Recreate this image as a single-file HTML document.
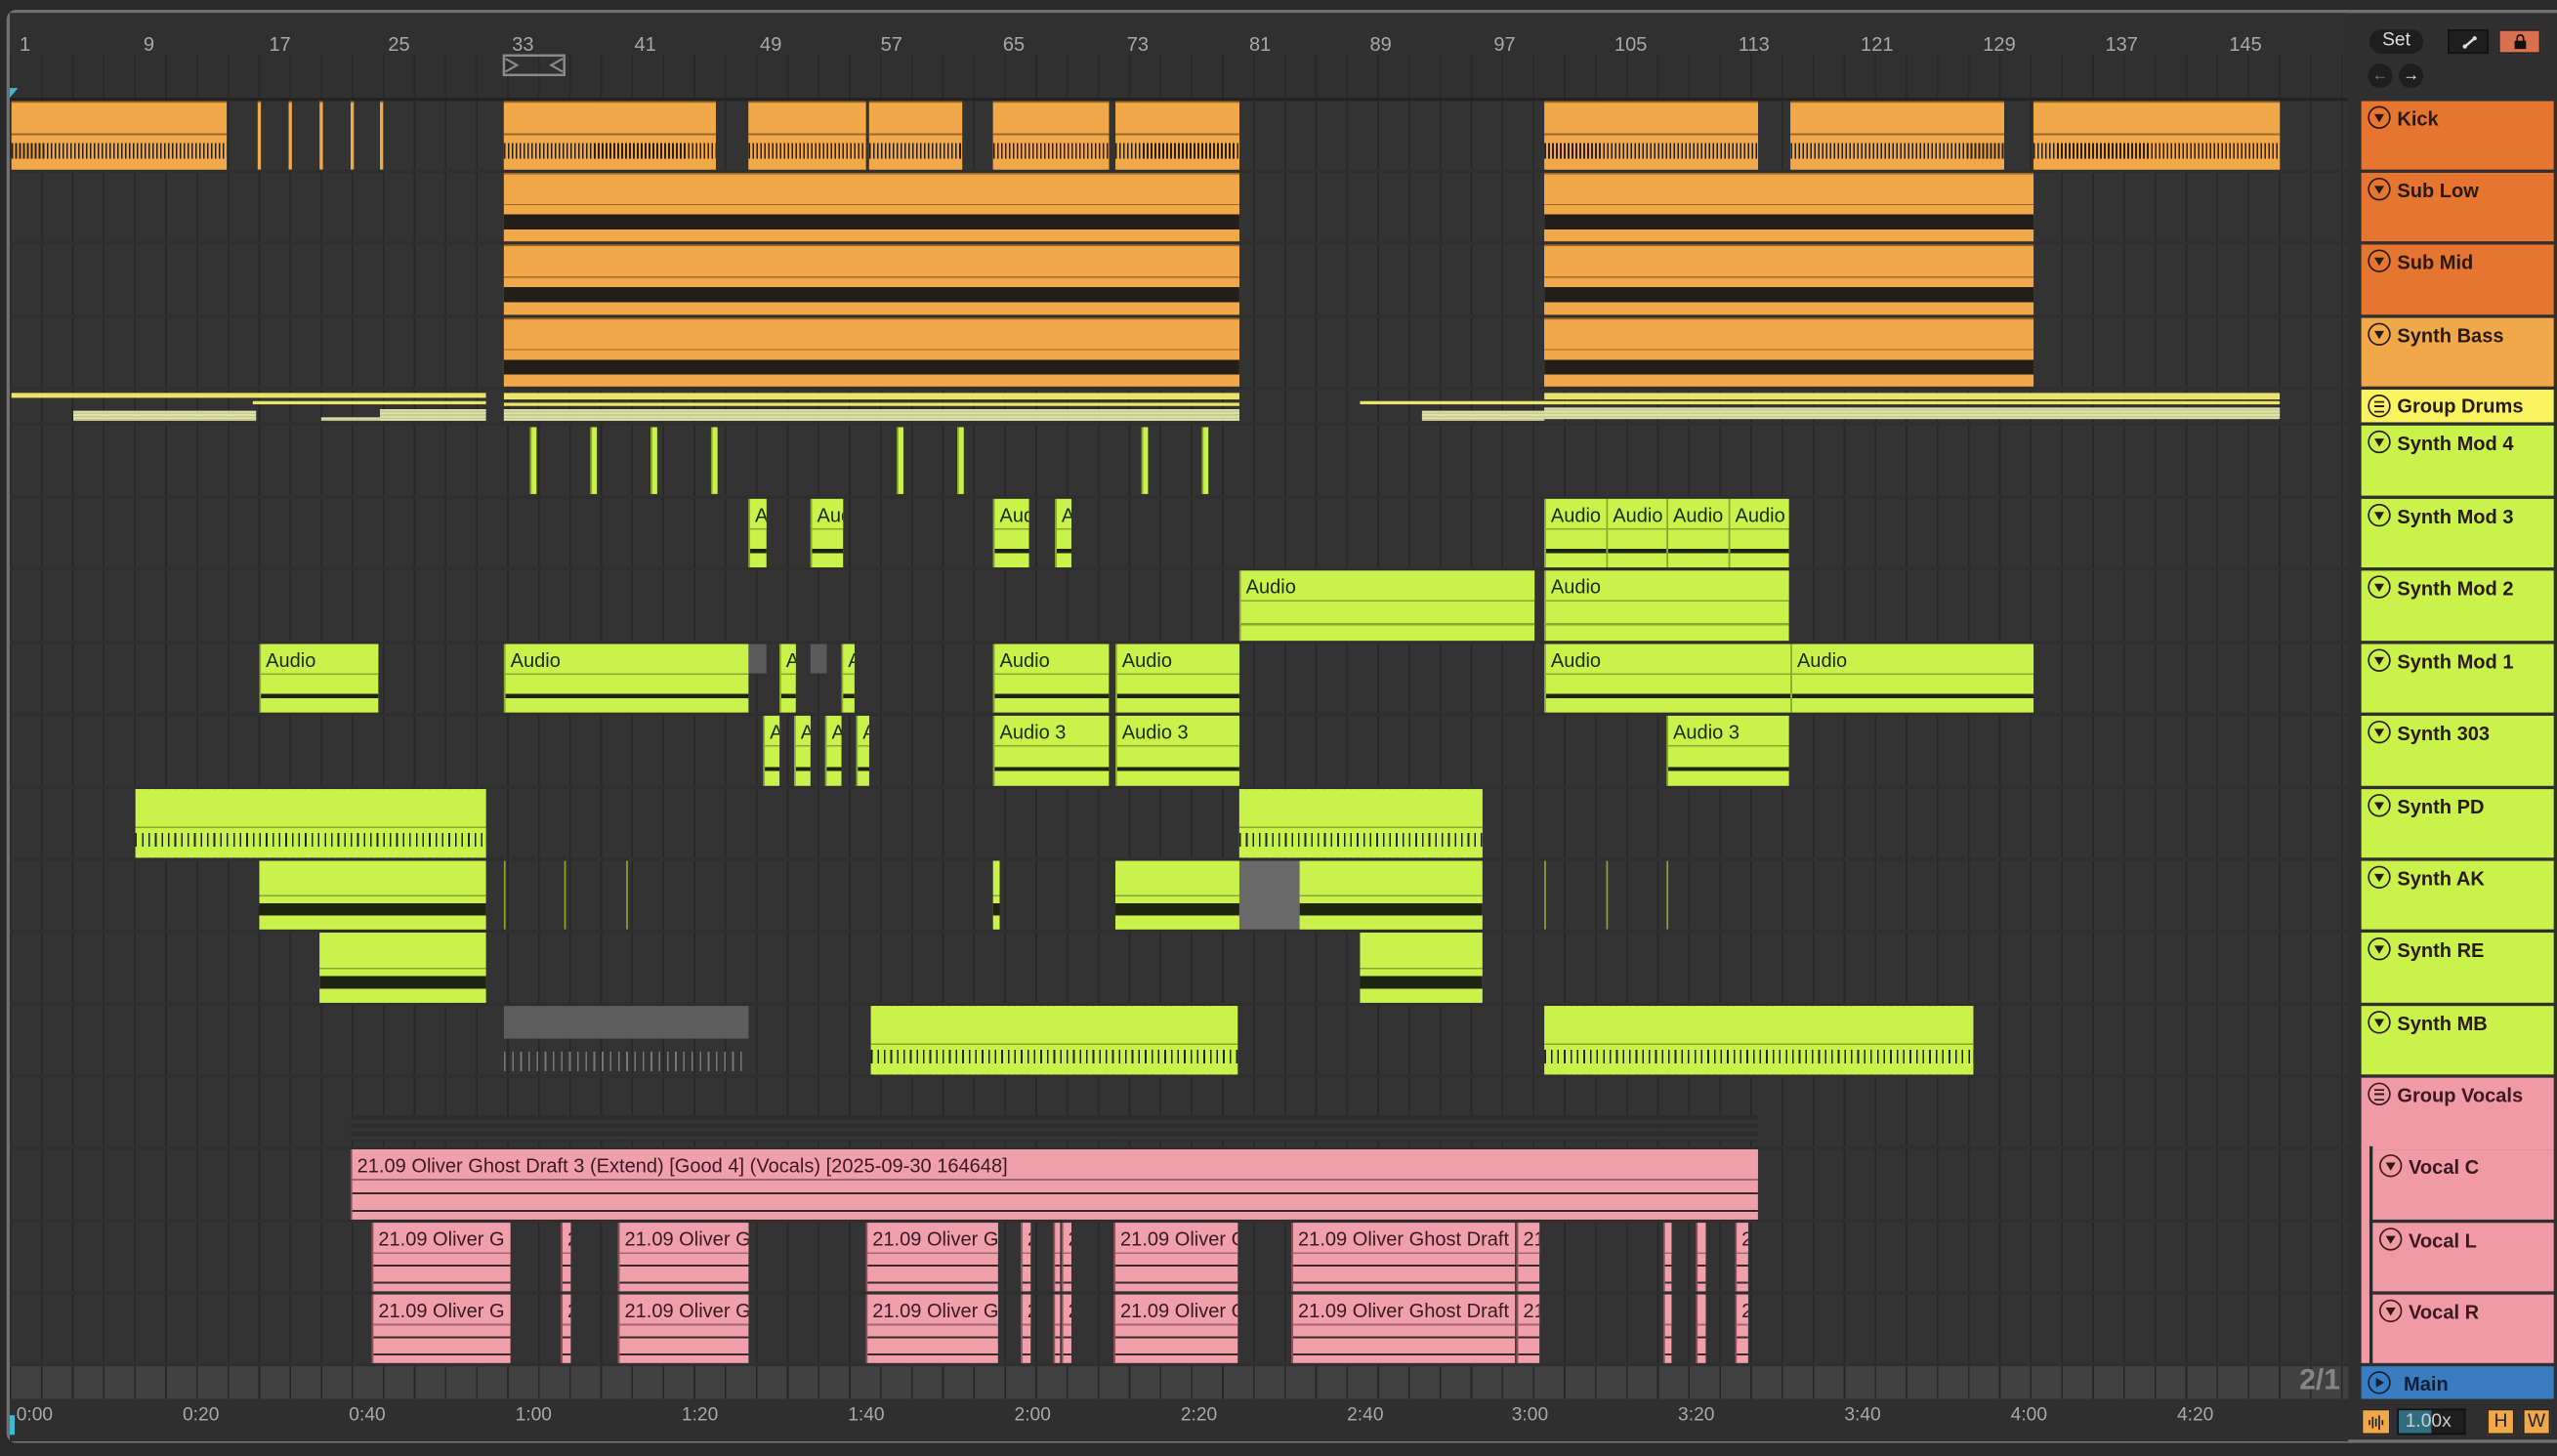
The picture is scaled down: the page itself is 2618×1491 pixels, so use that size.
<!DOCTYPE html>
<html><head><meta charset="utf-8"><style>
*{margin:0;padding:0;box-sizing:border-box}
html,body{width:2618px;height:1490px;overflow:hidden;background:#2a2a2a}
#s{position:absolute;left:0;top:0;width:1568px;height:893px;transform:scale(1.66964);transform-origin:0 0;font-family:"Liberation Sans",sans-serif;background:#2a2a2a}
.a{position:absolute}
#frame{position:absolute;left:4px;top:6px;width:1570px;height:879px;border:2px solid #707070;border-radius:6px;background:#2f2f2f}
.lane{position:absolute;left:6px;width:1434px;background-color:#333;background-image:repeating-linear-gradient(90deg,#272727 0 1px,transparent 1px 19.06px)}
.o{position:absolute;background:#f0a848;border-top:1px solid #a06a25}
.kk{background-image:linear-gradient(#f0a848 0 46%,#9a6a2a 46% 49%,#f0a848 49% 60%,transparent 60% 84%,#f0a848 84%),repeating-linear-gradient(90deg,#2a2014 0 1px,#f0a848 1px 2.4px)}
.sb{background-image:linear-gradient(#f0a848 0 44%,#9a6a2a 44% 46%,#f0a848 46% 60%,#241e18 60% 82%,#f0a848 82%)}
.l{position:absolute;background:#c9f24b;border-left:1px solid #8aa830;overflow:hidden;font-size:12px;color:#1f2a08;white-space:nowrap;padding:3px 0 0 3px;background-image:linear-gradient(#c9f24b 0 18px,#8aa830 18px 19px,transparent 19px),linear-gradient(transparent 0 73%,#1e2410 73% 79%,transparent 79%)}
.lm{position:absolute;background:#c9f24b;background-image:linear-gradient(#c9f24b 0 55%,#8aa830 55% 57%,#c9f24b 57% 64%,transparent 64% 84%,#c9f24b 84%),repeating-linear-gradient(90deg,#1e2410 0 1px,#c9f24b 1px 4px)}
.lb{position:absolute;background:#c9f24b;background-image:linear-gradient(#c9f24b 0 50%,#8aa830 50% 52%,#c9f24b 52% 62%,#1e2410 62% 80%,#c9f24b 80%)}
.g{position:absolute;background:#5a5a5a}
.p{position:absolute;background:#f0a0aa;border-left:1px solid #905058;overflow:hidden;font-size:12px;color:#3a1a20;white-space:nowrap;padding:3px 0 0 3px;background-image:linear-gradient(#f0a0aa 0 18px,#a06870 18px 19px,transparent 19px),linear-gradient(transparent 0 61%,#3a2a2c 61% 64%,transparent 64% 86%,#3a2a2c 86% 89%,transparent 89%)}
.t{position:absolute;width:4px;background:#c9f24b;border-left:1px solid #8aa830}
.h{position:absolute;left:1448px;width:118px;font-size:12px;font-weight:bold;color:#2a1a10;padding:4px 0 0 22px;white-space:nowrap}
.h i{position:absolute;left:4px;top:3px;width:14px;height:14px;border:1.3px solid #2a1a10;border-radius:50%}
.h i:after{content:"";position:absolute;left:2.6px;top:4px;border-left:3.4px solid transparent;border-right:3.4px solid transparent;border-top:5px solid #2a1a10}
.h i.gr:after{border:none;top:3px;left:3px;width:6px;height:5px;border-top:1.3px solid #2a1a10;border-bottom:1.3px solid #2a1a10;background:linear-gradient(transparent 1.5px,#2a1a10 1.5px 2.8px,transparent 2.8px)}
.h i.pl:after{left:4px;top:2.6px;border-top:3.4px solid transparent;border-bottom:3.4px solid transparent;border-left:5px solid #10203a;border-right:none}
.rl{position:absolute;top:20px;font-size:12px;color:#a8a8a8}
.tl{position:absolute;top:862px;font-size:11.5px;color:#a8a8a8}
.y{position:absolute;background:#ece468}
.yl{position:absolute;background:#dfe3a8;background-image:repeating-linear-gradient(#dfe3a8 0 1px,#c8cc90 1px 2px)}
</style></head><body><div id="s">
<div id="frame"></div>
<div class="a" style="left:6px;top:8px;width:1434px;height:53px;background:#303030;background-image:repeating-linear-gradient(90deg,#272727 0 1px,transparent 1px 19.06px);background-position:0 25px;background-size:100% 28px;background-repeat:repeat-x"></div>
<div class="a" style="left:6px;top:8px;width:1434px;height:25px;background:#303030"></div>
<div class="rl" style="left:12px">1</div><div class="rl" style="left:88px">9</div><div class="rl" style="left:165px">17</div><div class="rl" style="left:238px">25</div><div class="rl" style="left:314px">33</div><div class="rl" style="left:389px">41</div><div class="rl" style="left:466px">49</div><div class="rl" style="left:540px">57</div><div class="rl" style="left:615px">65</div><div class="rl" style="left:691px">73</div><div class="rl" style="left:766px">81</div><div class="rl" style="left:840px">89</div><div class="rl" style="left:916px">97</div><div class="rl" style="left:990px">105</div><div class="rl" style="left:1066px">113</div><div class="rl" style="left:1141px">121</div><div class="rl" style="left:1216px">129</div><div class="rl" style="left:1291px">137</div><div class="rl" style="left:1367px">145</div>
<svg class="a" style="left:308px;top:33px" width="40" height="14"><rect x="1" y="1" width="37" height="12" fill="none" stroke="#8a8a8a" stroke-width="1.5"/><path d="M2 3 L9 7 L2 11 M37 3 L30 7 L37 11" fill="none" stroke="#8a8a8a" stroke-width="1.3"/></svg>
<div class="a" style="left:6px;top:54px;border-left:5px solid #3fb8d0;border-bottom:6px solid transparent;width:0;height:0"></div>
<div class="a" style="left:6px;top:60px;width:1434px;height:2px;background:#222"></div>
<div class="lane" style="top:62px;height:42px"></div><div class="lane" style="top:106px;height:42px"></div><div class="lane" style="top:150px;height:43px"></div><div class="lane" style="top:195px;height:42px"></div><div class="lane" style="top:239px;height:20px"></div><div class="lane" style="top:261px;height:43px"></div><div class="lane" style="top:306px;height:42px"></div><div class="lane" style="top:350px;height:43px"></div><div class="lane" style="top:395px;height:42px"></div><div class="lane" style="top:439px;height:43px"></div><div class="lane" style="top:484px;height:42px"></div><div class="lane" style="top:528px;height:42px"></div><div class="lane" style="top:572px;height:43px"></div><div class="lane" style="top:617px;height:42px"></div><div class="lane" style="top:661px;height:42px"></div><div class="lane" style="top:705px;height:43px"></div><div class="lane" style="top:750px;height:42px"></div><div class="lane" style="top:794px;height:42px"></div>
<div class="lane" style="top:838px;height:20px;background-color:#414141"></div>
<div class="a" style="left:1410px;top:836px;font-size:18px;font-weight:bold;color:#858585">2/1</div>
<div class="o kk" style="left:7px;top:62px;width:132px;height:42px"></div>
<div class="o" style="left:158px;top:62px;width:1.5px;height:42px"></div><div class="o" style="left:177px;top:62px;width:1.5px;height:42px"></div><div class="o" style="left:196px;top:62px;width:1.5px;height:42px"></div><div class="o" style="left:215px;top:62px;width:1.5px;height:42px"></div><div class="o" style="left:233px;top:62px;width:1.5px;height:42px"></div>
<div class="o kk" style="left:309px;top:62px;width:130px;height:42px"></div><div class="o kk" style="left:459px;top:62px;width:72px;height:42px"></div><div class="o kk" style="left:533px;top:62px;width:57px;height:42px"></div><div class="o kk" style="left:609px;top:62px;width:71px;height:42px"></div><div class="o kk" style="left:684px;top:62px;width:76px;height:42px"></div><div class="o kk" style="left:947px;top:62px;width:131px;height:42px"></div><div class="o kk" style="left:1098px;top:62px;width:131px;height:42px"></div><div class="o kk" style="left:1247px;top:62px;width:151px;height:42px"></div>
<div class="o sb" style="left:309px;top:106px;width:451px;height:42px"></div><div class="o sb" style="left:947px;top:106px;width:300px;height:42px"></div>
<div class="o sb" style="left:309px;top:150px;width:451px;height:43px"></div><div class="o sb" style="left:947px;top:150px;width:300px;height:43px"></div>
<div class="o sb" style="left:309px;top:195px;width:451px;height:42px"></div><div class="o sb" style="left:947px;top:195px;width:300px;height:42px"></div>
<div class="y" style="left:7px;top:241px;width:291px;height:3px"></div><div class="y" style="left:309px;top:241px;width:451px;height:4px"></div><div class="y" style="left:947px;top:241px;width:451px;height:4px"></div>
<div class="y" style="left:155px;top:246px;width:143px;height:1.5px"></div><div class="y" style="left:309px;top:247px;width:451px;height:1.5px"></div><div class="y" style="left:834px;top:246px;width:564px;height:1.5px"></div>
<div class="yl" style="left:45px;top:252px;width:112px;height:6px"></div><div class="yl" style="left:233px;top:251px;width:65px;height:7px"></div><div class="yl" style="left:309px;top:251px;width:451px;height:7px"></div><div class="yl" style="left:197px;top:256px;width:36px;height:1.5px"></div><div class="yl" style="left:872px;top:252px;width:75px;height:6px"></div><div class="yl" style="left:947px;top:250px;width:451px;height:7px"></div>
<div class="t" style="left:325px;top:262px;height:41px"></div><div class="t" style="left:362px;top:262px;height:41px"></div><div class="t" style="left:399px;top:262px;height:41px"></div><div class="t" style="left:436px;top:262px;height:41px"></div><div class="t" style="left:550px;top:262px;height:41px"></div><div class="t" style="left:587px;top:262px;height:41px"></div><div class="t" style="left:700px;top:262px;height:41px"></div><div class="t" style="left:737px;top:262px;height:41px"></div>
<div class="l" style="left:459px;top:306px;width:11px;height:42px">A</div><div class="l" style="left:497px;top:306px;width:20px;height:42px">Aud</div><div class="l" style="left:609px;top:306px;width:22px;height:42px">Aud</div><div class="l" style="left:647px;top:306px;width:10px;height:42px">A</div>
<div class="l" style="left:947px;top:306px;width:38px;height:42px">Audio</div><div class="l" style="left:985px;top:306px;width:37px;height:42px">Audio</div><div class="l" style="left:1022px;top:306px;width:38px;height:42px">Audio</div><div class="l" style="left:1060px;top:306px;width:37px;height:42px">Audio</div>
<div class="l" style="left:760px;top:350px;width:181px;height:43px;background-image:linear-gradient(#c9f24b 0 18px,#8aa830 18px 19px,transparent 19px),linear-gradient(transparent 0 75%,#8aa830 75% 78%,transparent 78%)">Audio</div><div class="l" style="left:947px;top:350px;width:150px;height:43px;background-image:linear-gradient(#c9f24b 0 18px,#8aa830 18px 19px,transparent 19px),linear-gradient(transparent 0 75%,#8aa830 75% 78%,transparent 78%)">Audio</div>
<div class="l" style="left:159px;top:395px;width:73px;height:42px">Audio</div><div class="l" style="left:309px;top:395px;width:150px;height:42px">Audio</div>
<div class="g" style="left:459px;top:395px;width:11px;height:18px"></div><div class="l" style="left:478px;top:395px;width:10px;height:42px">A</div><div class="g" style="left:497px;top:395px;width:10px;height:18px"></div><div class="l" style="left:516px;top:395px;width:8px;height:42px">A</div>
<div class="l" style="left:609px;top:395px;width:71px;height:42px">Audio</div><div class="l" style="left:684px;top:395px;width:76px;height:42px">Audio</div><div class="l" style="left:947px;top:395px;width:151px;height:42px">Audio</div><div class="l" style="left:1098px;top:395px;width:149px;height:42px">Audio</div>
<div class="l" style="left:468px;top:439px;width:10px;height:43px">A</div><div class="l" style="left:487px;top:439px;width:10px;height:43px">A</div><div class="l" style="left:506px;top:439px;width:10px;height:43px">A</div><div class="l" style="left:525px;top:439px;width:8px;height:43px">A</div>
<div class="l" style="left:609px;top:439px;width:71px;height:43px">Audio 3</div><div class="l" style="left:684px;top:439px;width:76px;height:43px">Audio 3</div><div class="l" style="left:1022px;top:439px;width:75px;height:43px">Audio 3</div>
<div class="lm" style="left:83px;top:484px;width:215px;height:42px"></div><div class="lm" style="left:760px;top:484px;width:149px;height:42px"></div>
<div class="lb" style="left:159px;top:528px;width:139px;height:42px"></div><div class="lb" style="left:609px;top:528px;width:4px;height:42px"></div><div class="lb" style="left:684px;top:528px;width:76px;height:42px"></div><div class="g" style="left:760px;top:528px;width:37px;height:42px;background:#6a6a6a"></div><div class="lb" style="left:797px;top:528px;width:112px;height:42px"></div>
<div class="a" style="left:309px;top:528px;width:1px;height:42px;background:#8aa830"></div><div class="a" style="left:346px;top:528px;width:1px;height:42px;background:#8aa830"></div><div class="a" style="left:384px;top:528px;width:1px;height:42px;background:#8aa830"></div><div class="a" style="left:947px;top:528px;width:1px;height:42px;background:#8aa830"></div><div class="a" style="left:985px;top:528px;width:1px;height:42px;background:#8aa830"></div><div class="a" style="left:1022px;top:528px;width:1px;height:42px;background:#8aa830"></div>
<div class="lb" style="left:196px;top:572px;width:102px;height:43px"></div><div class="lb" style="left:834px;top:572px;width:75px;height:43px"></div>
<div class="g" style="left:309px;top:617px;width:150px;height:20px;background:#5e5e5e"></div><div class="a" style="left:309px;top:645px;width:150px;height:12px;background:repeating-linear-gradient(90deg,#777 0 1px,transparent 1px 5px)"></div>
<div class="lm" style="left:534px;top:617px;width:225px;height:42px"></div><div class="lm" style="left:947px;top:617px;width:263px;height:42px"></div>
<div class="a" style="left:215px;top:684px;width:863px;height:16px;background:repeating-linear-gradient(#2c2c2c 0 3px,#353535 3px 5px);opacity:.9"></div>
<div class="p" style="left:215px;top:705px;width:863px;height:43px">21.09 Oliver Ghost Draft 3 (Extend) [Good 4] (Vocals) [2025-09-30 164648]</div>
<div class="p" style="left:228px;top:750px;width:85px;height:42px">21.09 Oliver G</div><div class="p" style="left:344px;top:750px;width:6px;height:42px">2</div><div class="p" style="left:379px;top:750px;width:80px;height:42px">21.09 Oliver G</div><div class="p" style="left:531px;top:750px;width:81px;height:42px">21.09 Oliver G</div><div class="p" style="left:626px;top:750px;width:6px;height:42px">2</div><div class="p" style="left:646px;top:750px;width:4px;height:42px"></div><div class="p" style="left:651px;top:750px;width:6px;height:42px">2</div><div class="p" style="left:683px;top:750px;width:76px;height:42px">21.09 Oliver G</div><div class="p" style="left:792px;top:750px;width:137px;height:42px">21.09 Oliver Ghost Draft</div><div class="p" style="left:930px;top:750px;width:14px;height:42px">21</div><div class="p" style="left:1020px;top:750px;width:5px;height:42px"></div><div class="p" style="left:1040px;top:750px;width:6px;height:42px"></div><div class="p" style="left:1064px;top:750px;width:8px;height:42px">2</div>
<div class="p" style="left:228px;top:794px;width:85px;height:42px">21.09 Oliver G</div><div class="p" style="left:344px;top:794px;width:6px;height:42px">2</div><div class="p" style="left:379px;top:794px;width:80px;height:42px">21.09 Oliver G</div><div class="p" style="left:531px;top:794px;width:81px;height:42px">21.09 Oliver G</div><div class="p" style="left:626px;top:794px;width:6px;height:42px">2</div><div class="p" style="left:646px;top:794px;width:4px;height:42px"></div><div class="p" style="left:651px;top:794px;width:6px;height:42px">2</div><div class="p" style="left:683px;top:794px;width:76px;height:42px">21.09 Oliver G</div><div class="p" style="left:792px;top:794px;width:137px;height:42px">21.09 Oliver Ghost Draft</div><div class="p" style="left:930px;top:794px;width:14px;height:42px">21</div><div class="p" style="left:1020px;top:794px;width:5px;height:42px"></div><div class="p" style="left:1040px;top:794px;width:6px;height:42px"></div><div class="p" style="left:1064px;top:794px;width:8px;height:42px">2</div>
<div class="a" style="left:6px;top:858px;width:1434px;height:26px;background:#2f2f2f"></div>
<div class="tl" style="left:10px">0:00</div><div class="tl" style="left:112px">0:20</div><div class="tl" style="left:214px">0:40</div><div class="tl" style="left:316px">1:00</div><div class="tl" style="left:418px">1:20</div><div class="tl" style="left:520px">1:40</div><div class="tl" style="left:622px">2:00</div><div class="tl" style="left:724px">2:20</div><div class="tl" style="left:826px">2:40</div><div class="tl" style="left:927px">3:00</div><div class="tl" style="left:1029px">3:20</div><div class="tl" style="left:1131px">3:40</div><div class="tl" style="left:1233px">4:00</div><div class="tl" style="left:1335px">4:20</div>
<div class="a" style="left:6px;top:868px;width:3px;height:12px;background:#3fb8d0"></div>
<div class="a" style="left:1453px;top:18px;width:33px;height:15px;border-radius:8px;background:#1e1e1e;color:#ddd;font-size:11.5px;text-align:center;line-height:15px">Set</div>
<div class="a" style="left:1501px;top:18px;width:25px;height:15px;background:#1e1e1e;border:1px solid #111"><svg class="a" style="left:8px;top:3px" width="9" height="8"><path d="M1 7 L8 1" stroke="#ddd" stroke-width="1.5"/><circle cx="1.5" cy="6.5" r="1.3" fill="#ddd"/><circle cx="7.5" cy="1.5" r="1.3" fill="#ddd"/></svg></div>
<div class="a" style="left:1532px;top:18px;width:26px;height:15px;background:#d9704f;border:1px solid #222"><div class="a" style="left:9px;top:6px;width:7px;height:5px;background:#111"></div><div class="a" style="left:10px;top:2px;width:5px;height:6px;border:1.3px solid #111;border-radius:3px 3px 0 0;border-bottom:none"></div></div>
<div class="a" style="left:1452px;top:39px;width:15px;height:15px;border-radius:50%;background:#1e1e1e;color:#777;font-size:10px;text-align:center;line-height:15px">←</div>
<div class="a" style="left:1471px;top:39px;width:15px;height:15px;border-radius:50%;background:#1e1e1e;color:#eee;font-size:10px;text-align:center;line-height:15px">→</div>
<div class="h" style="top:62px;height:42px;background:#e5752f"><i></i>Kick</div>
<div class="h" style="top:106px;height:42px;background:#e5752f"><i></i>Sub Low</div>
<div class="h" style="top:150px;height:43px;background:#e5752f"><i></i>Sub Mid</div>
<div class="h" style="top:195px;height:42px;background:#f0a848"><i></i>Synth Bass</div>
<div class="h" style="top:239px;height:20px;background:#fbf460;padding-top:3px"><i class="gr"></i>Group Drums</div>
<div class="h" style="top:261px;height:43px;background:#c9f24b"><i></i>Synth Mod 4</div>
<div class="h" style="top:306px;height:42px;background:#c9f24b"><i></i>Synth Mod 3</div>
<div class="h" style="top:350px;height:43px;background:#c9f24b"><i></i>Synth Mod 2</div>
<div class="h" style="top:395px;height:42px;background:#c9f24b"><i></i>Synth Mod 1</div>
<div class="h" style="top:439px;height:43px;background:#c9f24b"><i></i>Synth 303</div>
<div class="h" style="top:484px;height:42px;background:#c9f24b"><i></i>Synth PD</div>
<div class="h" style="top:528px;height:42px;background:#c9f24b"><i></i>Synth AK</div>
<div class="h" style="top:572px;height:43px;background:#c9f24b"><i></i>Synth RE</div>
<div class="h" style="top:617px;height:42px;background:#c9f24b"><i></i>Synth MB</div>
<div class="h" style="top:661px;height:44px;background:#f09aa6;color:#3a1a20"><i class="gr" style="border-color:#3a1a20"></i>Group Vocals</div>
<div class="a" style="left:1448px;top:703px;width:5px;height:133px;background:#f09aa6"></div>
<div class="a" style="left:1453px;top:703px;width:2px;height:133px;background:#2a2a2a"></div>
<div class="h" style="left:1455px;width:111px;top:705px;height:43px;background:#f09aa6;color:#3a1a20"><i style="border-color:#3a1a20"></i>Vocal C</div>
<div class="h" style="left:1455px;width:111px;top:750px;height:42px;background:#f09aa6;color:#3a1a20"><i style="border-color:#3a1a20"></i>Vocal L</div>
<div class="h" style="left:1455px;width:111px;top:794px;height:42px;background:#f09aa6;color:#3a1a20"><i style="border-color:#3a1a20"></i>Vocal R</div>
<div class="h" style="top:838px;height:20px;background:#3a7cc0;color:#10203a;padding-left:26px"><i class="pl" style="border-color:#10203a"></i>Main</div>
<div class="a" style="left:1448px;top:864px;width:18px;height:16px;background:#f0a848;border:1px solid #222"><svg class="a" style="left:3px;top:3px" width="11" height="9"><path d="M1 3v3M3 1v7M5 2v5M7 0v9M9 3v3" stroke="#222" stroke-width="1"/></svg></div>
<div class="a" style="left:1470px;top:864px;width:42px;height:16px;background:#1e1e1e;border:1px solid #111"><div class="a" style="left:0;top:0;width:20px;height:14px;background:#2f6e80"></div><div class="a" style="left:4px;top:0;font-size:11.5px;color:#ccc;line-height:14px">1.00x</div></div>
<div class="a" style="left:1525px;top:864px;width:17px;height:16px;background:#f0a848;border:1px solid #222;font-size:11.5px;color:#222;text-align:center;line-height:14px">H</div>
<div class="a" style="left:1547px;top:864px;width:17px;height:16px;background:#f0a848;border:1px solid #222;font-size:11.5px;color:#222;text-align:center;line-height:14px">W</div>
</div></body></html>
